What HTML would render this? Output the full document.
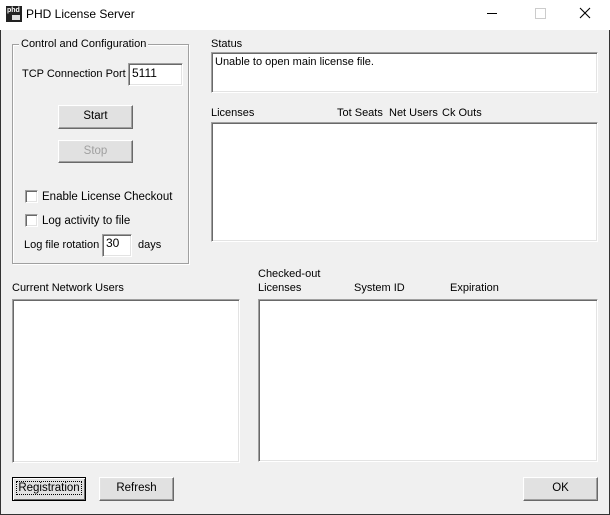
<!DOCTYPE html><html><head><style>
body{margin:0;width:610px;height:515px;background:#f0f0f0;position:relative;overflow:hidden;font-family:"Liberation Sans",sans-serif;font-size:11px;color:#000}
.a{position:absolute;white-space:nowrap}
.t{line-height:13px}
.box{position:absolute;background:#fff;border-top:1px solid #a0a0a0;border-left:1px solid #a0a0a0;border-right:1px solid #fff;border-bottom:1px solid #fff;box-shadow:inset 1px 1px 0 #696969,inset -1px -1px 0 #e3e3e3;box-sizing:border-box}
.btn{position:absolute;box-sizing:border-box;background:#e1e1e1;border-top:1px solid #fff;border-left:1px solid #fff;border-right:1px solid #696969;border-bottom:1px solid #696969;box-shadow:inset -1px -1px 0 #a0a0a0,inset 1px 1px 0 #e3e3e3;text-align:center;font-size:11.5px}
.cb{position:absolute;width:13px;height:13px;box-sizing:border-box;background:#fff;border-top:1px solid #a0a0a0;border-left:1px solid #a0a0a0;border-right:1px solid #fff;border-bottom:1px solid #fff;box-shadow:inset 1px 1px 0 #696969,inset -1px -1px 0 #e3e3e3}
</style></head><body>
<div class="a" style="left:0;top:0;width:610px;height:30px;background:#fff"></div>
<div class="a" style="left:6px;top:6px;width:16px;height:16px;background:#222"><div style="position:absolute;left:1px;top:1px;font-size:7px;color:#fff;font-weight:bold;line-height:7px">phd</div><div style="position:absolute;left:6px;top:9px;width:8px;height:5px;background:#ddd"></div></div>
<div class="a" style="left:26px;top:7px;font-size:12px;">PHD License Server</div>
<div class="a" style="left:487px;top:13px;width:10px;height:1px;background:#000"></div>
<div class="a" style="left:535px;top:8px;width:9px;height:9px;border:1px solid #ccc"></div>
<svg class="a" style="left:579px;top:7px" width="12" height="12"><path d="M1 1L11 11M11 1L1 11" stroke="#000" stroke-width="1.1"/></svg>
<div class="a" style="left:0;top:30px;width:1px;height:485px;background:#333"></div>
<div class="a" style="left:609px;top:30px;width:1px;height:485px;background:#333"></div>
<div class="a" style="left:0;top:514px;width:610px;height:1px;background:#333"></div>

<div class="a" style="left:12px;top:44px;width:175px;height:218px;border:1px solid #a0a0a0;box-shadow:1px 1px 0 #fff,inset 1px 1px 0 #fff"></div>
<div class="a t" style="left:19px;top:38px;background:#f0f0f0;padding:0 2px">Control and Configuration</div>
<div class="a t" style="left:22px;top:68px;font-size:11px">TCP Connection Port</div>
<div class="box" style="left:128px;top:63px;width:55px;height:23px"><div class="a t" style="left:3px;top:3px;font-size:12px">5111</div></div>
<div class="btn" style="left:58px;top:105px;width:75px;height:24px;line-height:21px">Start</div>
<div class="btn" style="left:58px;top:140px;width:75px;height:23px;line-height:20px;color:#a0a0a0">Stop</div>
<div class="cb" style="left:25px;top:190px"></div>
<div class="a t" style="left:42px;top:191px;font-size:11.5px">Enable License Checkout</div>
<div class="cb" style="left:25px;top:214px"></div>
<div class="a t" style="left:42px;top:215px;font-size:11.5px">Log activity to file</div>
<div class="a t" style="left:24px;top:239px">Log file rotation</div>
<div class="box" style="left:102px;top:234px;width:30px;height:23px"><div class="a t" style="left:3px;top:2px;font-size:12px">30</div></div>
<div class="a t" style="left:138px;top:239px">days</div>

<div class="a t" style="left:211px;top:38px">Status</div>
<div class="box" style="left:211px;top:52px;width:387px;height:41px"><div class="a t" style="left:3px;top:3px">Unable to open main license file.</div></div>
<div class="a t" style="left:211px;top:107px">Licenses</div>
<div class="a t" style="left:337px;top:107px">Tot Seats</div>
<div class="a t" style="left:389px;top:107px">Net Users</div>
<div class="a t" style="left:442px;top:107px">Ck Outs</div>
<div class="box" style="left:211px;top:122px;width:387px;height:120px"></div>

<div class="a t" style="left:12px;top:282px">Current Network Users</div>
<div class="box" style="left:12px;top:299px;width:228px;height:164px"></div>
<div class="a t" style="left:258px;top:268px">Checked-out</div>
<div class="a t" style="left:258px;top:282px">Licenses</div>
<div class="a t" style="left:354px;top:282px">System ID</div>
<div class="a t" style="left:450px;top:282px">Expiration</div>
<div class="box" style="left:258px;top:299px;width:340px;height:163px"></div>

<div class="btn" style="left:12px;top:477px;width:74px;height:24px;line-height:21px;border:1px solid #000;box-shadow:inset 1px 1px 0 #fff,inset -1px -1px 0 #696969"><span style="outline:1px dotted #000;padding:0 1px">Registration</span></div>
<div class="btn" style="left:99px;top:477px;width:75px;height:24px;line-height:21px">Refresh</div>
<div class="btn" style="left:523px;top:477px;width:75px;height:24px;line-height:21px">OK</div>
</body></html>
